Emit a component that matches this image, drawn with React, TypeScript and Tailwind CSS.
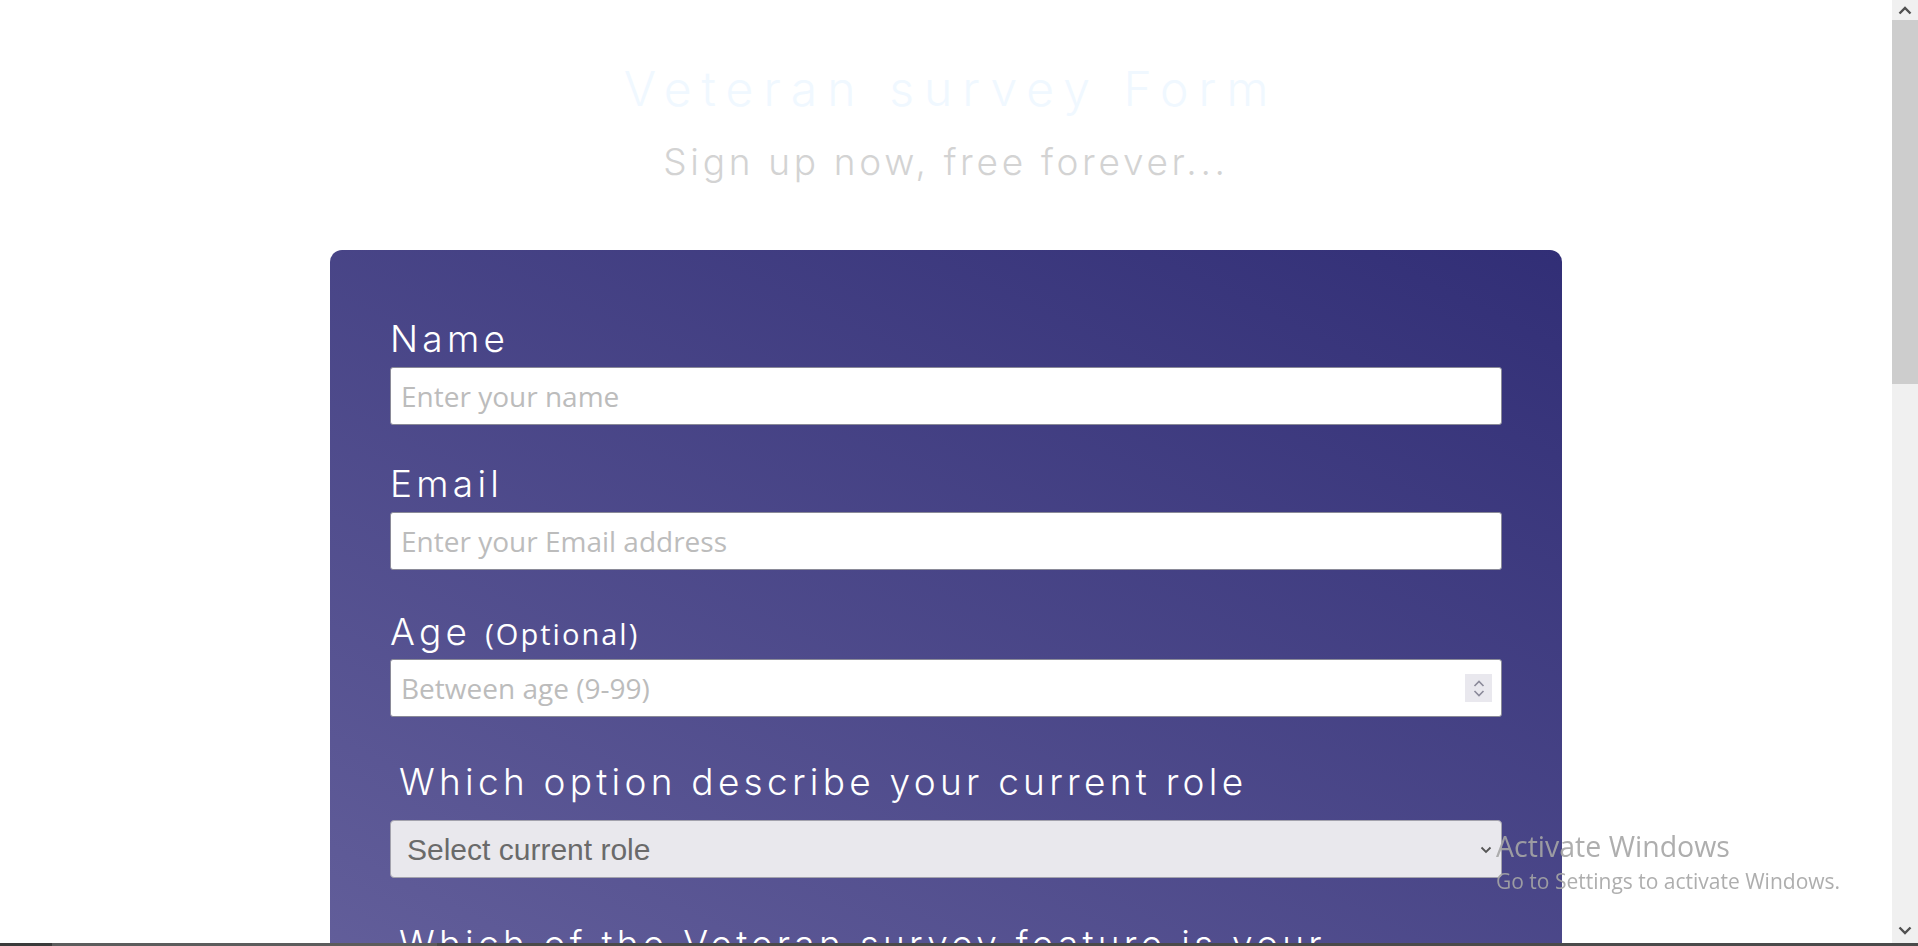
import { useState } from 'react'

const labelFont = "font-['Inter','Noto_Sans',sans-serif]"

function Scrollbar() {
  return (
    <div className="w-[26px] flex flex-col bg-[#f0f0f0]">
      <div className="h-[20px] flex items-center justify-center">
        <svg width="14" height="9" viewBox="0 0 14 9" fill="none">
          <path d="M1.5 7.5 L7 2 L12.5 7.5" stroke="#505050" strokeWidth="2.4" />
        </svg>
      </div>
      <div className="h-[364px] bg-[#cdcdcd]" />
      <div className="flex-1" />
      <div className="h-[22px] flex items-start justify-center pt-[5px]">
        <svg width="14" height="9" viewBox="0 0 14 9" fill="none">
          <path d="M1.5 1.5 L7 7 L12.5 1.5" stroke="#505050" strokeWidth="2.4" />
        </svg>
      </div>
    </div>
  )
}

export default function App() {
  const [form, setForm] = useState({ name: '', email: '', age: '', role: '' })

  return (
    <div className="h-screen flex flex-col overflow-hidden bg-white">
      <div className="flex flex-1 min-h-0">
        <main className="flex-1 overflow-hidden">
          {/* header */}
          <header className={`pt-[65px] text-center ${labelFont} font-light`}>
            <h1 className="text-[48px] leading-none tracking-[0.21em] text-[#f0f8ff] pl-[0.21em]">
              Veteran survey Form
            </h1>
            <p className="mt-[30px] text-[37px] leading-none tracking-[0.1em] text-[#d3d3d3]">
              Sign up now, free forever...
            </p>
          </header>

          {/* card */}
          <form
            className="mx-auto mt-[70px] w-[1232px] rounded-t-[12px] bg-fixed bg-[linear-gradient(to_top_right,#625e9a_8%,#312e76_78%)] px-[60px] pt-[70px] pb-[80px]"
            onSubmit={(e) => e.preventDefault()}
          >
            <label className={`block ${labelFont} font-light text-[37px] leading-none tracking-[0.115em] text-white`}>
              Name
            </label>
            <input
              type="text"
              placeholder="Enter your name"
              value={form.name}
              onChange={(e) => setForm({ ...form, name: e.target.value })}
              className="mt-[10px] block w-full h-[58px] rounded-[3px] border border-[#8a8a98] bg-white px-[10px] font-['Open_Sans',sans-serif] text-[28px] text-[#333] placeholder:text-[#bcbcbc] outline-none"
            />

            <label className={`mt-[40px] block ${labelFont} font-light text-[37px] leading-none tracking-[0.115em] text-white`}>
              Email
            </label>
            <input
              type="email"
              placeholder="Enter your Email address"
              value={form.email}
              onChange={(e) => setForm({ ...form, email: e.target.value })}
              className="mt-[10px] block w-full h-[58px] rounded-[3px] border border-[#8a8a98] bg-white px-[10px] font-['Open_Sans',sans-serif] text-[28px] text-[#333] placeholder:text-[#bcbcbc] outline-none"
            />

            <label className="mt-[43px] flex items-baseline gap-[14px] text-white leading-none">
              <span className={`${labelFont} font-light text-[37px] tracking-[0.115em]`}>Age</span>
              <span className="font-['Open_Sans',sans-serif] font-medium text-[29px] tracking-[0.07em]">(Optional)</span>
            </label>
            <div className="relative mt-[9px]">
              <input
                type="number"
                placeholder="Between age (9-99)"
                value={form.age}
                onChange={(e) => setForm({ ...form, age: e.target.value })}
                className="block w-full h-[58px] rounded-[3px] border border-[#8a8a98] bg-white px-[10px] font-['Open_Sans',sans-serif] text-[28px] text-[#333] placeholder:text-[#bcbcbc] outline-none [appearance:textfield] [&::-webkit-inner-spin-button]:appearance-none"
              />
              {/* spinner */}
              <div className="absolute right-[10px] top-[15px] w-[27px] h-[28px] bg-[#e9e8ee] flex flex-col items-center justify-center gap-[3px]">
                <svg width="12" height="7" viewBox="0 0 12 7" fill="none">
                  <path d="M1.5 6 L6 1.5 L10.5 6" stroke="#8b8a9a" strokeWidth="1.6" />
                </svg>
                <svg width="12" height="7" viewBox="0 0 12 7" fill="none">
                  <path d="M1.5 1 L6 5.5 L10.5 1" stroke="#8b8a9a" strokeWidth="1.6" />
                </svg>
              </div>
            </div>

            <p className={`mt-[46px] pl-[9px] ${labelFont} font-light text-[37px] leading-none tracking-[0.115em] text-white`}>
              Which option describe your current role
            </p>
            <div className="relative mt-[20px]">
              <select
                value={form.role}
                onChange={(e) => setForm({ ...form, role: e.target.value })}
                className="block w-full h-[58px] appearance-none rounded-[4px] border border-[#a3a2ad] bg-[#e9e8ed] pl-[16px] pr-[40px] font-['Liberation_Sans',Arial,sans-serif] text-[30px] text-[#6a6a6a] outline-none"
              >
                <option value="">Select current role</option>
                <option value="student">Student</option>
                <option value="full-time">Full time job</option>
                <option value="learner">Full time learner</option>
                <option value="other">Other</option>
              </select>
              <svg
                className="absolute right-[10px] top-[26px] pointer-events-none"
                width="12"
                height="8"
                viewBox="0 0 12 8"
                fill="none"
              >
                <path d="M1.5 1.5 L6 6 L10.5 1.5" stroke="#555" strokeWidth="1.8" />
              </svg>
            </div>

            <p className={`mt-[47px] pl-[9px] max-w-[980px] ${labelFont} font-light text-[37px] leading-none tracking-[0.115em] text-white`}>
              Which of the Veteran survey feature is your favorite?
            </p>
            <div className="mt-[20px] h-[58px] rounded-[4px] border border-[#a3a2ad] bg-[#e9e8ed]" />
          </form>
        </main>
        <Scrollbar />
      </div>
      <div className="h-[3px] flex">
        <div className="w-[52px] bg-[#3a3a3a]" />
        <div className="w-[385px] bg-[#5c5c5c]" />
        <div className="flex-1 bg-[#4a4a4a]" />
      </div>

      {/* windows activation watermark */}
      <div className="fixed left-[1496px] top-[832px] pointer-events-none font-['Open_Sans',sans-serif] text-[#a5a5a5]/90">
        <div className="text-[28.5px] leading-none">Activate Windows</div>
        <div className="mt-[10px] text-[21px] leading-none">Go to Settings to activate Windows.</div>
      </div>
    </div>
  )
}
